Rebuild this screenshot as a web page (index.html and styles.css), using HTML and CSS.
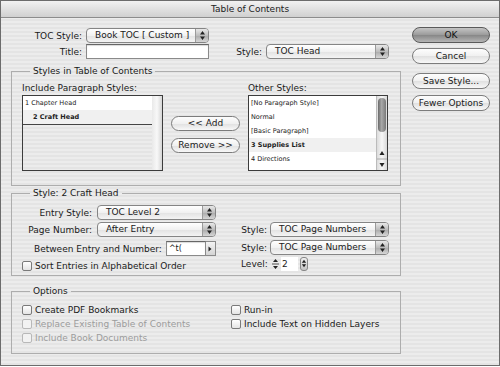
FILE: index.html
```html
<!DOCTYPE html>
<html lang="en">
<head>
    <meta charset="UTF-8">
    <title>Table of Contents</title>
    <link rel="stylesheet" href="styles.css">
</head>
<body>
    <div class="window">
        <div class="titlebar">Table of Contents</div>

        <div class="content">
            <div class="main">
                <div class="row">
                    <span class="label w71">TOC Style:</span>
                    <div class="select w123"><span class="value">Book TOC [ Custom ]</span><span class="arrows"><svg width="7" height="11" viewBox="0 0 7 11"><path d="M3.5 1 6 4.5H1Z M3.5 10 6 6.5H1Z" fill="#222"/></svg></span></div>
                </div>
                <div class="row row-title">
                    <span class="label w71">Title:</span>
                    <div class="input w123"></div>
                    <span class="label w53">Style:</span>
                    <div class="select w123"><span class="value">TOC Head</span><span class="arrows"><svg width="7" height="11" viewBox="0 0 7 11"><path d="M3.5 1 6 4.5H1Z M3.5 10 6 6.5H1Z" fill="#222"/></svg></span></div>
                </div>

                <fieldset class="group group-styles">
                    <legend>Styles in Table of Contents</legend>
                    <div class="styles-grid">
                        <div class="col-label">Include Paragraph Styles:</div>
                        <div></div>
                        <div class="col-label">Other Styles:</div>

                        <div class="list list-left">
                            <div class="list-items">
                                <div class="item">1 Chapter Head</div>
                                <div class="item selected indent">2 Craft Head</div>
                            </div>
                            <div class="track"></div>
                        </div>

                        <div class="move-buttons">
                            <button class="btn">&lt;&lt; Add</button>
                            <button class="btn">Remove &gt;&gt;</button>
                        </div>

                        <div class="list list-right">
                            <div class="list-items white">
                                <div class="item">[No Paragraph Style]</div>
                                <div class="item">Normal</div>
                                <div class="item">[Basic Paragraph]</div>
                                <div class="item selected">3 Supplies List</div>
                                <div class="item">4 Directions</div>
                            </div>
                            <div class="scrollbar">
                                <div class="thumb"></div>
                                <div class="scroll-arrows">
                                    <svg width="10" height="22" viewBox="0 0 10 22"><path d="M5 3 7.5 7H2.5Z M5 19 7.5 15H2.5Z" fill="#222"/><path d="M0 11H10" stroke="#aaa"/></svg>
                                </div>
                            </div>
                        </div>
                    </div>
                </fieldset>

                <fieldset class="group group-entry">
                    <legend>Style: 2 Craft Head</legend>
                    <div class="entry-grid">
                        <div class="row">
                            <span class="label w70">Entry Style:</span>
                            <div class="select w119"><span class="value">TOC Level 2</span><span class="arrows"><svg width="7" height="11" viewBox="0 0 7 11"><path d="M3.5 1 6 4.5H1Z M3.5 10 6 6.5H1Z" fill="#222"/></svg></span></div>
                        </div>
                        <div></div>

                        <div class="row">
                            <span class="label w70">Page Number:</span>
                            <div class="select w119"><span class="value">After Entry</span><span class="arrows"><svg width="7" height="11" viewBox="0 0 7 11"><path d="M3.5 1 6 4.5H1Z M3.5 10 6 6.5H1Z" fill="#222"/></svg></span></div>
                        </div>
                        <div class="row">
                            <span class="label w26">Style:</span>
                            <div class="select w119"><span class="value">TOC Page Numbers</span><span class="arrows"><svg width="7" height="11" viewBox="0 0 7 11"><path d="M3.5 1 6 4.5H1Z M3.5 10 6 6.5H1Z" fill="#222"/></svg></span></div>
                        </div>

                        <div class="row row-between">
                            <span class="label">Between Entry and Number:</span>
                            <div class="input small-input">^t(</div>
                            <div class="mini-btn"><svg width="6" height="8" viewBox="0 0 6 8"><path d="M1.5 1.5 4.5 4 1.5 6.5Z" fill="#222"/></svg></div>
                        </div>
                        <div class="row row-style2">
                            <span class="label w26">Style:</span>
                            <div class="select w119"><span class="value">TOC Page Numbers</span><span class="arrows"><svg width="7" height="11" viewBox="0 0 7 11"><path d="M3.5 1 6 4.5H1Z M3.5 10 6 6.5H1Z" fill="#222"/></svg></span></div>
                        </div>

                        <label class="check"><span class="box"></span>Sort Entries in Alphabetical Order</label>
                        <div class="row">
                            <span class="label w26">Level:</span>
                            <div class="stepper"><svg width="9" height="14" viewBox="0 0 9 14"><path d="M4.5 2 7 5H2Z M4.5 12 7 9H2Z" fill="#222"/><path d="M1 7H8" stroke="#555"/></svg></div>
                            <div class="level-input">2</div>
                            <div class="level-popup"><svg width="7" height="11" viewBox="0 0 7 11"><path d="M3.5 1 6 4.5H1Z M3.5 10 6 6.5H1Z" fill="#222"/></svg></div>
                        </div>
                    </div>
                </fieldset>

                <fieldset class="group group-options">
                    <legend>Options</legend>
                    <div class="options-grid">
                        <label class="check"><span class="box"></span>Create PDF Bookmarks</label>
                        <label class="check"><span class="box"></span>Run-in</label>
                        <label class="check disabled"><span class="box"></span>Replace Existing Table of Contents</label>
                        <label class="check"><span class="box"></span>Include Text on Hidden Layers</label>
                        <label class="check disabled"><span class="box"></span>Include Book Documents</label>
                    </div>
                </fieldset>
            </div>

            <div class="side">
                <button class="btn side-btn default">OK</button>
                <button class="btn side-btn cancel">Cancel</button>
                <button class="btn side-btn save">Save Style...</button>
                <button class="btn side-btn fewer">Fewer Options</button>
            </div>
        </div>
    </div>
</body>
</html>
```

FILE: styles.css
```css
body {
    margin: 0;
    padding: 0;
    font-family: "DejaVu Sans", sans-serif;
    font-size: 9px;
    color: #1a1a1a;
    background: #fff;
}
.window {
    width: 500px;
    height: 366px;
    box-sizing: border-box;
    border: 1px solid #6c6c6c;
    background: repeating-linear-gradient(#ececec 0, #ececec 2px, #e4e4e4 2px, #e4e4e4 4px);
}
.titlebar {
    height: 16px;
    line-height: 16px;
    text-align: center;
    border-bottom: 1px solid #8c8c8c;
    background: linear-gradient(#f2f2f2, #d0d0d0);
    color: #222;
}
.content {
    display: flex;
    padding: 9px 0 0 10px;
}
.main {
    width: 390px;
    padding-top: 1px;
}
.row {
    display: flex;
    align-items: center;
    height: 15px;
}
.row-title {
    margin-top: 1px;
}
.label {
    display: inline-block;
    text-align: right;
    margin-right: 4px;
    white-space: nowrap;
}
.w71 { width: 71px; }
.w70 { width: 70px; margin-right: 5px; }
.w53 { width: 53px; }
.w26 { width: 26px; margin-right: 3px; }
.w123 { width: 123px; }
.w119 { width: 119px; }

.select {
    display: flex;
    height: 15px;
    box-sizing: border-box;
    border: 1px solid #858585;
    border-radius: 4px;
    background: linear-gradient(#ffffff, #f1f1f1 50%, #e2e2e2 51%, #f4f4f4);
    overflow: hidden;
}
.select .value {
    flex: 1;
    padding-left: 8px;
    line-height: 13px;
    white-space: nowrap;
}
.select .arrows {
    width: 12px;
    display: flex;
    align-items: center;
    justify-content: center;
    border-left: 1px solid #9a9a9a;
    background: linear-gradient(#e8e8e8, #bdbdbd 50%, #a9a9a9 51%, #d6d6d6);
}
.input {
    height: 15px;
    box-sizing: border-box;
    border: 1px solid #8a8a8a;
    border-top-color: #666;
    background: #fff;
    box-shadow: inset 0 1px 1px rgba(0, 0, 0, 0.15);
}

fieldset.group {
    margin: 0;
    padding: 0;
    border: 1px solid #adadad;
    min-width: 0;
}
legend {
    margin-left: 8px;
    padding: 0 3px;
    line-height: 11px;
}
.group-styles {
    margin-top: 7px !important;
    padding: 6px 0 14px 10px !important;
}
.styles-grid {
    display: grid;
    grid-template-columns: 141px 69px 140px;
    column-gap: 8px;
    grid-template-rows: 12px 76px;
}
.col-label {
    line-height: 11px;
}
.list {
    display: flex;
    box-sizing: border-box;
    border: 1px solid #3c3c3c;
    height: 76px;
}
.list-items {
    flex: 1;
}
.list-items.white {
    background: #fff;
}
.list-left .list-items .item:last-child {
    border-bottom: 1px solid #444;
}
.item {
    height: 14px;
    line-height: 14px;
    padding-left: 2px;
    font-size: 6.5px;
    background: #fff;
    color: #222;
    white-space: nowrap;
}
.item.selected {
    background: #f0f0f0;
    font-weight: bold;
}
.item.indent {
    padding-left: 10px;
}
.track {
    width: 10px;
    background: linear-gradient(90deg, #e9e9e9, #f8f8f8 50%, #d6d6d6);
}
.scrollbar {
    width: 10px;
    display: flex;
    flex-direction: column;
    justify-content: space-between;
    background: linear-gradient(90deg, #dcdcdc, #f6f6f6 50%, #d8d8d8);
    border-left: 1px solid #bbb;
}
.thumb {
    margin: 2px 1px 0;
    height: 34px;
    border-radius: 5px;
    background: linear-gradient(90deg, #6a6a6a, #a8a8a8 45%, #7a7a7a);
}
.scroll-arrows {
    height: 22px;
    display: flex;
}
.move-buttons {
    display: flex;
    flex-direction: column;
    gap: 7px;
    padding-top: 21px;
}
.btn {
    height: 15px;
    padding: 0;
    box-sizing: border-box;
    border: 1px solid #7c7c7c;
    border-radius: 8px;
    background: linear-gradient(#fdfdfd, #f0f0f0 50%, #e0e0e0 51%, #f8f8f8);
    font-family: "DejaVu Sans", sans-serif;
    font-size: 9px;
    color: #1a1a1a;
    line-height: 13px;
}

.group-entry {
    margin-top: 2px !important;
    padding: 6px 0 4px 10px !important;
}
.entry-grid {
    display: grid;
    grid-template-columns: 219px 1fr;
    grid-auto-rows: 15px;
    row-gap: 2px;
}
.row-between {
    padding-left: 12px;
    margin-top: 2px;
}
.row-style2 {
    margin-top: 1px;
}
.small-input {
    width: 40px;
    padding-left: 2px;
    font-size: 8px;
    line-height: 13px;
}
.mini-btn {
    width: 10px;
    height: 15px;
    box-sizing: border-box;
    border: 1px solid #8a8a8a;
    border-left: none;
    background: linear-gradient(#f4f4f4, #d4d4d4);
    display: flex;
    align-items: center;
    justify-content: center;
}
.stepper {
    width: 10px;
    height: 14px;
    display: flex;
    align-items: center;
    justify-content: center;
}
.level-input {
    width: 16px;
    height: 14px;
    line-height: 14px;
    margin-left: 1px;
    padding-left: 1px;
    background: #fff;
}
.level-popup {
    width: 8px;
    height: 14px;
    margin-left: 2px;
    box-sizing: border-box;
    border: 1px solid #888;
    border-radius: 3px;
    background: linear-gradient(#eee, #c4c4c4);
    display: flex;
    align-items: center;
    justify-content: center;
}

.check {
    display: flex;
    align-items: center;
    height: 14px;
    white-space: nowrap;
}
.entry-grid .check {
    height: 15px;
    margin-top: 2px;
}
.check .box {
    width: 10px;
    height: 10px;
    box-sizing: border-box;
    border: 1px solid #7a7a7a;
    border-radius: 2px;
    background: linear-gradient(#ffffff, #e4e4e4);
    margin-right: 3px;
}
.check.disabled {
    color: #9c9c9c;
}
.check.disabled .box {
    border-color: #b8b8b8;
    background: #f2f2f2;
}
.group-options {
    margin-top: 10px !important;
    padding: 6px 0 8px 10px !important;
}
.options-grid {
    display: grid;
    grid-template-columns: 209px 1fr;
}

.side {
    display: flex;
    flex-direction: column;
    margin-left: 11px;
    width: 78px;
}
.side-btn {
    height: 16px;
    width: 78px;
}
.side-btn.default {
    background: linear-gradient(#c4c4c4, #9a9a9a 50%, #878787 51%, #b4b4b4);
    border-color: #5a5a5a;
    color: #111;
}
.cancel { margin-top: 5px; }
.save { margin-top: 9px; }
.fewer { margin-top: 6px; }
```
